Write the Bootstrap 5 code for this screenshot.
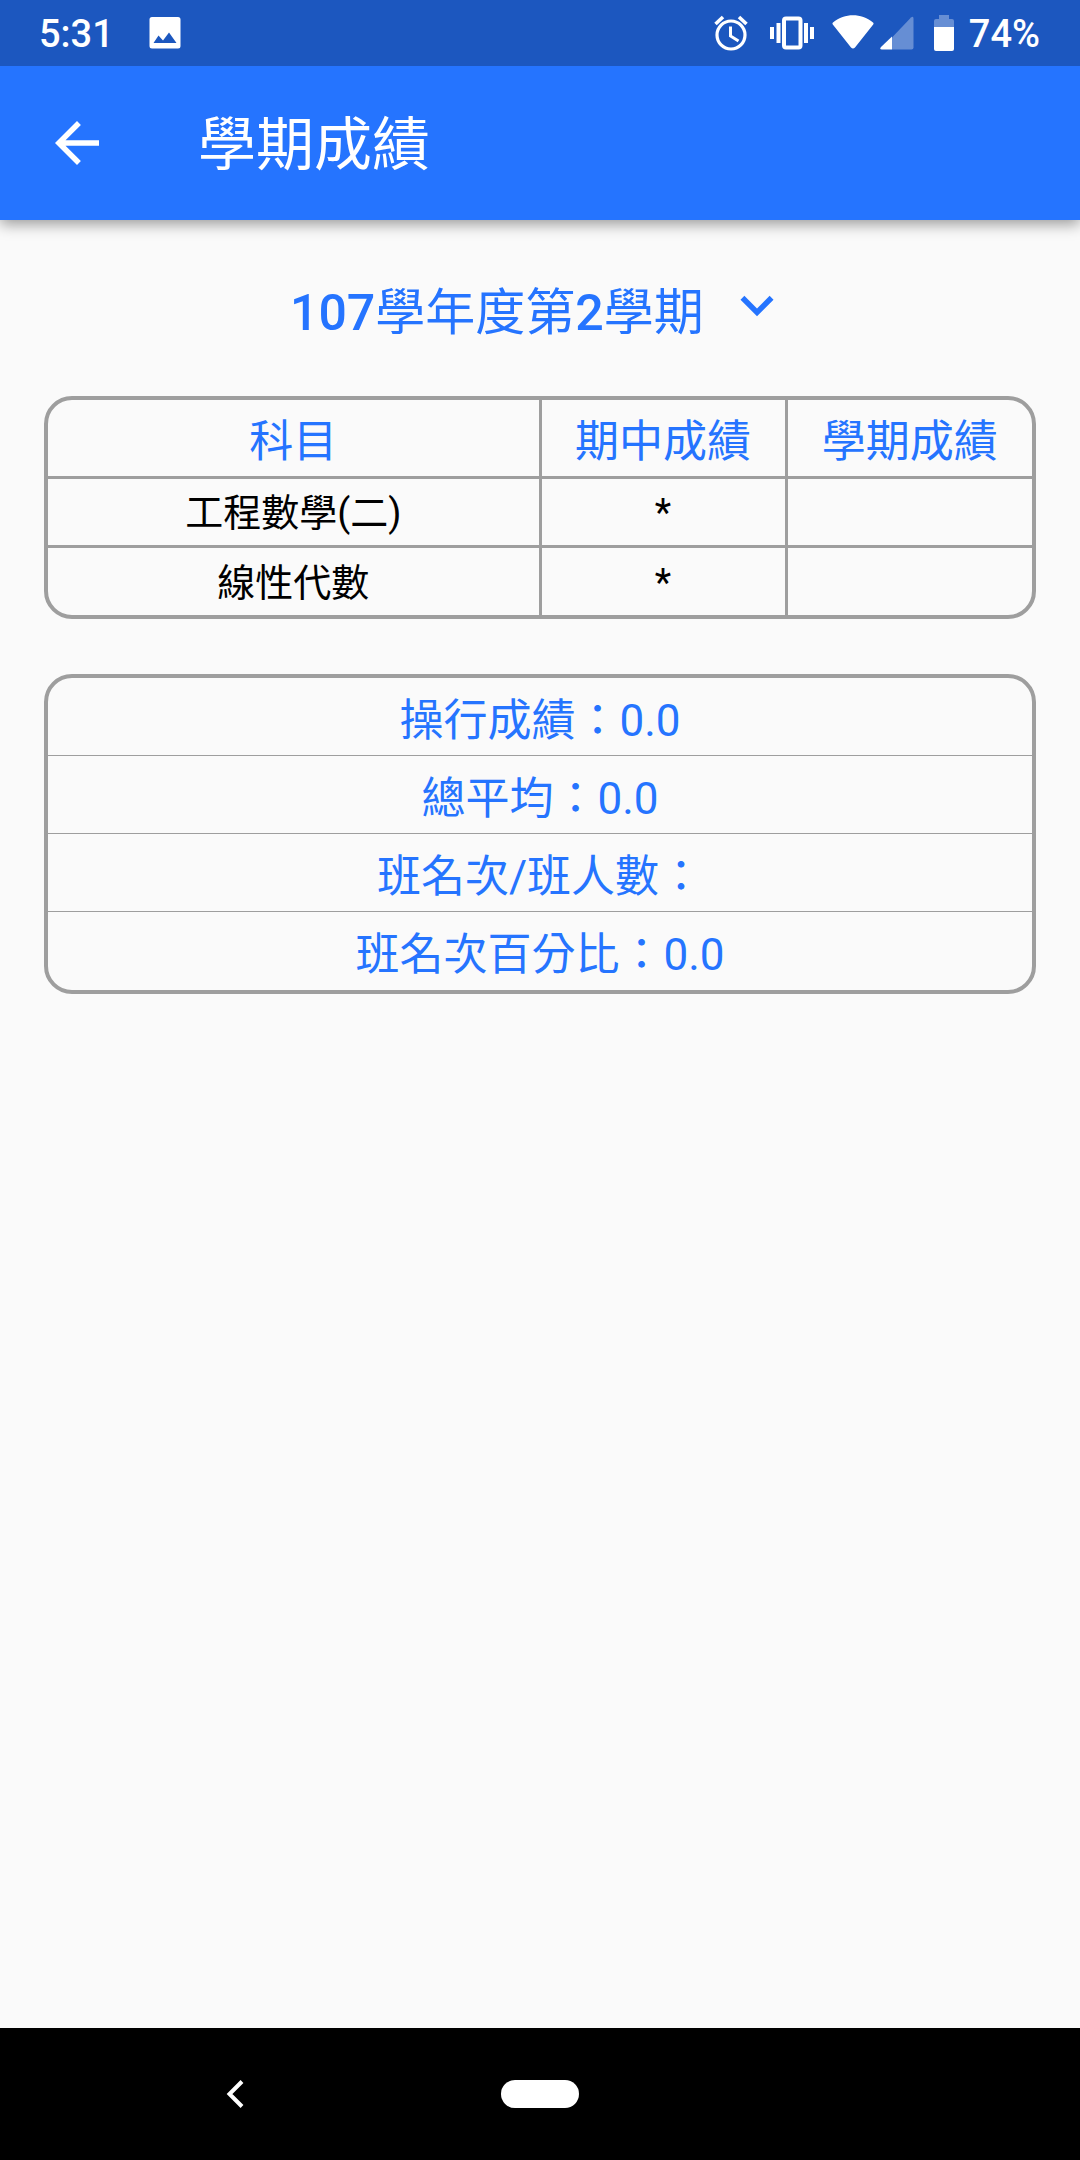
<!DOCTYPE html>
<html lang="zh-Hant">
<head>
<meta charset="utf-8">
<meta name="viewport" content="width=device-width, initial-scale=1">
<title>學期成績</title>
<link href="https://cdn.jsdelivr.net/npm/bootstrap@5.3.0/dist/css/bootstrap.min.css" rel="stylesheet">
<style>
  :root { --brand: #2574ff; --brand-dark: #1c57bf; --line: #9e9e9e; }
  body { background: #fafafa; font-family: Roboto, "Noto Sans CJK TC", sans-serif; }
  svg { display: block; flex: none; }
  .status-bar { background: var(--brand-dark); height: 66px; padding: 2px 40px 0 39px; font-size: 38px; font-weight: 500; line-height: 64px; z-index: 1; }
  .status-bar svg { margin-bottom: 2px; }
  .photo-icon { margin-left: 35px; }
  .vibrate-icon { margin-left: 22px; }
  .wifi-icon { margin-left: 18px; }
  .signal-icon { margin-left: 6px; }
  .battery-icon { margin-left: 20px; }
  .battery-text { margin-left: 15px; }
  .app-bar { background: var(--brand); height: 154px; padding: 0 44px; box-shadow: 0 4px 14px rgba(0,0,0,.4); }
  .app-title { font-size: 58px; line-height: 80px; margin: 0 0 0 88px; padding-top: 4px; }
  .content-area { padding: 44px; }
  .term-picker { color: var(--brand); height: 96px; margin-bottom: 36px; }
  .term-picker select { appearance: none; border: 0; background: none; color: inherit; padding: 2px 0 0; font-family: "Roboto Medium", Roboto, "Noto Sans CJK TC", sans-serif; font-size: 50px; height: 88px; line-height: 84px; }
  .term-picker svg { margin: 0 0 8px 20px; }
  .score-box { border: 4px solid var(--line); border-radius: 28px; overflow: hidden; }
  .score-box + .score-box { margin-top: 55px; }
  .score-table { table-layout: fixed; width: 100%; margin: 0; text-align: center; color: #000; font-size: 38px; border-collapse: collapse; }
  .score-table th, .score-table td { padding: 3px 0 0; line-height: 52px; height: 69px; font-weight: 400; vertical-align: middle; border: 0 solid var(--line); }
  .score-table thead th { color: var(--brand); font-size: 44px; height: 77px; padding-top: 9px; }
  .score-table tr > * + * { border-left-width: 3px; }
  .score-table tbody > tr > * { border-top-width: 3px; }
  .col-subject { width: 50%; }
  .summary-list li { color: var(--brand); font-size: 44px; line-height: 67px; padding-top: 10px; text-align: center; border-bottom: 1px solid var(--line); }
  .summary-list li:last-child { border-bottom-color: transparent; }
  .system-nav { height: 132px; padding: 0 82px; }
  .plain-btn { background: none; border: 0; padding: 0; color: #fff; display: flex; justify-content: center; }
  .home-pill { width: 78px; height: 28px; border-radius: 14px; background: #fff; }
</style>
</head>
<body class="d-flex flex-column min-vh-100">
  <div class="status-bar position-relative d-flex align-items-center text-white">
    <span>5:31</span>
    <svg class="photo-icon" width="32" height="32" viewBox="0 0 32 32" fill="currentColor" aria-hidden="true"><path fill-rule="evenodd" d="M3 0h26a2.500 2.500 0 0 1 2.500 2.500v26.500a2.500 2.500 0 0 1-2.500 2.500H3a2.500 2.500 0 0 1-2.500-2.500V2.500A2.500 2.500 0 0 1 3 0ZM4.500 26h23L20 15.500l-6 8-4.500-5Z"/></svg>
    <svg class="ms-auto" width="34" height="36" viewBox="0 0 34 36" fill="none" stroke="currentColor" stroke-width="3.200" aria-hidden="true"><circle cx="17" cy="20" r="14"/><path d="M1.500 9 9 2M32.500 9 25 2" stroke-width="3.600"/><path d="M16.500 11.500V21l8 5" stroke-width="3"/></svg>
    <svg class="vibrate-icon" width="44" height="34" viewBox="0 0 44 34" aria-hidden="true"><rect x="14" y="2.500" width="16.500" height="29" rx="2" fill="none" stroke="#fff" stroke-width="4"/><path fill="#fff" d="M0 11h4v12H0zM6.500 7h4v20h-4zM34 7h4v20h-4zM40 11h4v12h-4z"/></svg>
    <svg class="wifi-icon" width="42" height="36" viewBox="0 0 42 36" fill="currentColor" aria-hidden="true"><path d="M1 7.500C13-2.200 29-2.200 41 7.500q1 1 .2 2L23 32.500q-2 2.200-4 0L.8 9.500q-.8-1 .2-2Z"/></svg>
    <svg class="signal-icon" width="34" height="34" viewBox="0 0 34 34" fill="currentColor" aria-hidden="true"><path opacity=".33" d="M12 33.500V21.500L31 1.500q2.500-2 2.500 1v29q0 2-2 2Z"/><path d="M12 20.500v13H2q-3 0-1-2.500Z"/></svg>
    <svg class="battery-icon" width="20" height="36" viewBox="0 0 20 36" fill="currentColor" aria-hidden="true"><path opacity=".33" d="M5 0h10v4h3q2 0 2 2v6H0V6q0-2 2-2h3Z"/><path d="M0 12h20v22q0 2-2 2H2q-2 0-2-2Z"/></svg>
    <span class="battery-text">74%</span>
  </div>

  <header class="app-bar d-flex align-items-center text-white">
    <button class="plain-btn" type="button" aria-label="返回">
      <svg width="66" height="66" viewBox="0 0 24 24" fill="currentColor"><path d="M20 11H7.830l5.590-5.590L12 4l-8 8 8 8 1.410-1.410L7.830 13H20z"/></svg>
    </button>
    <h1 class="app-title fw-normal">學期成績</h1>
  </header>

  <main class="content-area flex-grow-1">
    <div class="term-picker d-flex align-items-center justify-content-center">
      <select aria-label="學期"><option>107學年度第2學期</option></select>
      <svg width="66" height="66" viewBox="0 0 24 24" fill="currentColor" aria-hidden="true"><path d="M16.590 7.580 12 12.170 7.410 7.580 6 9l6 6 6-6z"/></svg>
    </div>

    <section class="score-box">
      <table class="score-table">
        <colgroup><col class="col-subject"><col><col></colgroup>
        <thead><tr><th scope="col">科目</th><th scope="col">期中成績</th><th scope="col">學期成績</th></tr></thead>
        <tbody>
          <tr><td>工程數學(二)</td><td>*</td><td></td></tr>
          <tr><td>線性代數</td><td>*</td><td></td></tr>
        </tbody>
      </table>
    </section>

    <section class="score-box">
      <ul class="summary-list list-unstyled mb-0">
        <li>操行成績：0.0</li>
        <li>總平均：0.0</li>
        <li>班名次/班人數：</li>
        <li>班名次百分比：0.0</li>
      </ul>
    </section>
  </main>

  <nav class="system-nav bg-black d-flex align-items-center" aria-label="系統導覽">
    <div class="col-4 d-flex justify-content-center"><button class="plain-btn" type="button" aria-label="上一頁"><svg width="18" height="28" viewBox="0 0 18 28" fill="none" stroke="currentColor" stroke-width="4"><path d="M16 1.500 3.500 14 16 26.500"/></svg></button></div>
    <div class="col-4 d-flex justify-content-center"><button class="plain-btn home-pill" type="button" aria-label="主畫面"></button></div>
  </nav>
<script src="https://cdn.jsdelivr.net/npm/bootstrap@5.3.0/dist/js/bootstrap.bundle.min.js"></script>
</body>
</html>
